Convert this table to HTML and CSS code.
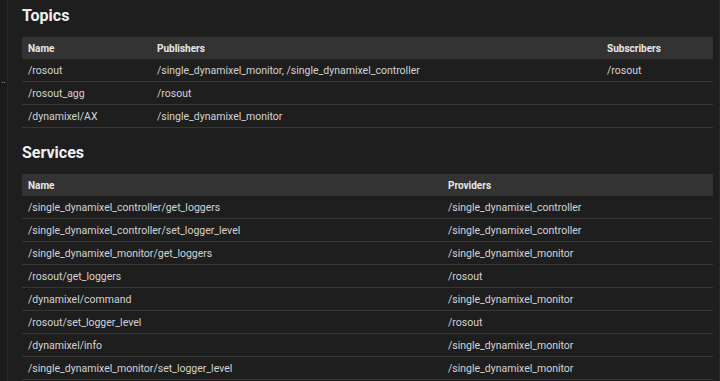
FILE: index.html
```html
<!DOCTYPE html>
<html lang="en">
<head>
  <meta charset="UTF-8" />
  <meta name="viewport" content="width=device-width, initial-scale=1.0" />
  <title>Node Info</title>
  <link rel="stylesheet" href="styles.css">
</head>
<body>
  <div class="layout">
    <!-- Splitter on the left -->
    <div class="gutter"><span class="grip">‥</span></div>

    <div class="main">
      <h2>Topics</h2>
      <table class="topics">
        <thead>
          <tr><th class="c-name">Name</th><th class="c-pub">Publishers</th><th>Subscribers</th></tr>
        </thead>
        <tbody>
          <tr><td>/rosout</td><td>/single_dynamixel_monitor, /single_dynamixel_controller</td><td>/rosout</td></tr>
          <tr><td>/rosout_agg</td><td>/rosout</td><td></td></tr>
          <tr><td>/dynamixel/AX</td><td>/single_dynamixel_monitor</td><td></td></tr>
        </tbody>
      </table>

      <h2>Services</h2>
      <table class="services">
        <thead>
          <tr><th class="c-svc">Name</th><th>Providers</th></tr>
        </thead>
        <tbody>
          <tr><td>/single_dynamixel_controller/get_loggers</td><td>/single_dynamixel_controller</td></tr>
          <tr><td>/single_dynamixel_controller/set_logger_level</td><td>/single_dynamixel_controller</td></tr>
          <tr><td>/single_dynamixel_monitor/get_loggers</td><td>/single_dynamixel_monitor</td></tr>
          <tr><td>/rosout/get_loggers</td><td>/rosout</td></tr>
          <tr><td>/dynamixel/command</td><td>/single_dynamixel_monitor</td></tr>
          <tr><td>/rosout/set_logger_level</td><td>/rosout</td></tr>
          <tr><td>/dynamixel/info</td><td>/single_dynamixel_monitor</td></tr>
          <tr><td>/single_dynamixel_monitor/set_logger_level</td><td>/single_dynamixel_monitor</td></tr>
        </tbody>
      </table>
    </div>
  </div>
</body>
</html>
```

FILE: styles.css
```css
body {
  margin: 0;
  padding: 0;
  background-color: #1e1e1e;
  color: #dcdcdc;
  font-family: Roboto, 'Liberation Sans', sans-serif;
  overflow: hidden;
  height: 100vh;
}
.layout {
  display: flex;
  height: 100%;
}
/* Splitter */
.gutter {
  width: 7px;
  flex: none;
  background: #1b1b1b;
  border-right: 1px solid #262626;
  position: relative;
}
.grip {
  position: absolute;
  top: 74px;
  left: 1px;
  font-size: 10px;
  color: #999;
}
.main {
  flex: 1;
  padding: 0 6px 0 14px;
  border-right: 1px solid #2a2a2a;
}
h2 {
  margin: 0;
  font-size: 16px;
  font-weight: bold;
  color: #f0f0f0;
  height: 37px;
  line-height: 32px;
}
.main h2:nth-of-type(2) {
  margin-top: 9px;
}
table {
  width: 100%;
  border-collapse: collapse;
  font-size: 10.5px;
}
th {
  background: #333333;
  color: #e8e8e8;
  text-align: left;
  font-weight: bold;
  font-size: 10px;
  height: 22px;
  padding: 0 6px;
}
td {
  height: 22px;
  padding: 0 6px;
  border-bottom: 1px solid #363636;
  color: #d4d4d4;
  white-space: nowrap;
}
.c-name {
  width: 117px;
}
.c-pub {
  width: 438px;
}
.c-svc {
  width: 408px;
}
```
